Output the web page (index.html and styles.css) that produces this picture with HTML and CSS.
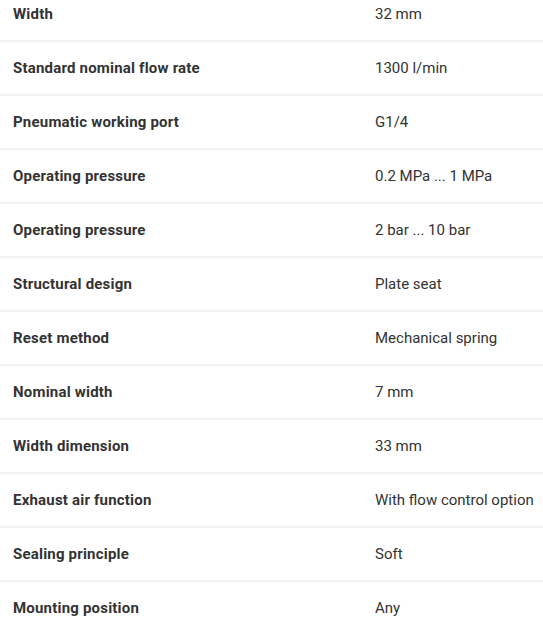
FILE: index.html
```html
<!DOCTYPE html>
<html lang="en">
<head>
<meta charset="utf-8">
<link rel="stylesheet" href="styles.css">
</head>
<body>
<table class="specs">
<colgroup><col class="col-label"><col class="col-value"></colgroup>
<tbody>
<tr><th>Width</th><td>32 mm</td></tr>
<tr><th>Standard nominal flow rate</th><td>1300 l/min</td></tr>
<tr><th>Pneumatic working port</th><td>G1/4</td></tr>
<tr><th>Operating pressure</th><td>0.2 MPa ... 1 MPa</td></tr>
<tr><th>Operating pressure</th><td>2 bar ... 10 bar</td></tr>
<tr><th>Structural design</th><td>Plate seat</td></tr>
<tr><th>Reset method</th><td>Mechanical spring</td></tr>
<tr><th>Nominal width</th><td>7 mm</td></tr>
<tr><th>Width dimension</th><td>33 mm</td></tr>
<tr><th>Exhaust air function</th><td>With flow control option</td></tr>
<tr><th>Sealing principle</th><td>Soft</td></tr>
<tr><th>Mounting position</th><td>Any</td></tr>
</tbody>
</table>
</body>
</html>
```

FILE: styles.css
```css
html, body {
  margin: 0;
  padding: 0;
  background: #fff;
}
body {
  font-family: Roboto, "Open Sans", sans-serif;
  font-size: 15px;
  color: #333333;
  overflow: hidden;
}
.specs {
  width: 543px;
  border-collapse: collapse;
  table-layout: fixed;
  margin-top: -12px;
}
.col-label {
  width: 362px;
}
.col-value {
  width: 181px;
}
.specs tr {
  border-bottom: 2px solid #f2f2f2;
}
.specs th,
.specs td {
  padding: 16px 0 16px 13px;
  text-align: left;
  vertical-align: middle;
  line-height: 20px;
}
.specs th {
  font-weight: 700;
  letter-spacing: 0.2px;
}
.specs td {
  font-weight: 400;
  white-space: nowrap;
}
```
